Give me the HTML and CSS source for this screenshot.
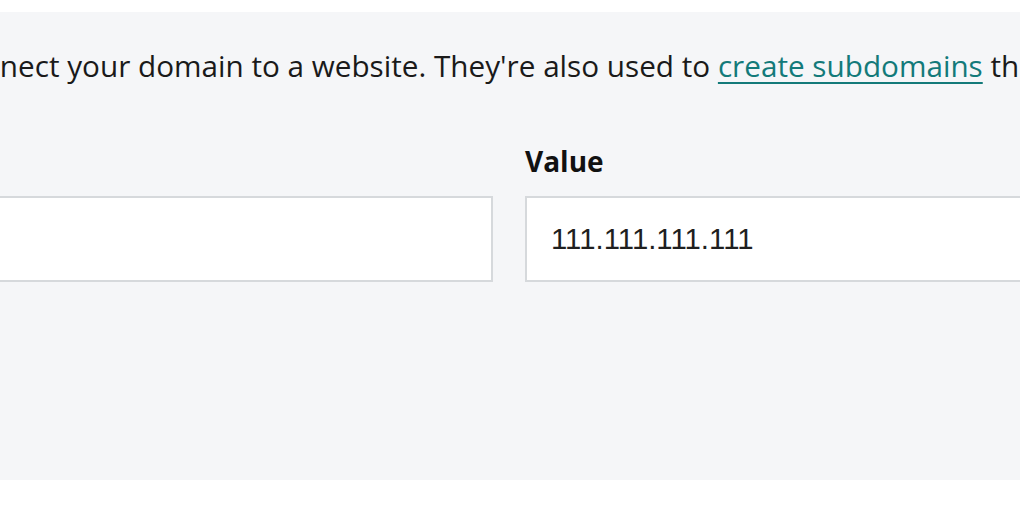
FILE: index.html
```html
<!DOCTYPE html>
<html lang="en">
<head>
<meta charset="utf-8">
<title>A record</title>
<link rel="stylesheet" href="styles.css">
</head>
<body>
<section class="panel">
  <div class="content">
    <p class="intro">A records connect your domain to a website. They're also used to <a href="#" class="link">create subdomains</a> that point to an IP address.</p>
    <div class="fields">
      <div class="field">
        <label class="label" for="name">Name</label>
        <input class="input" id="name" type="text" value="">
      </div>
      <div class="field">
        <label class="label" for="value">Value</label>
        <input class="input" id="value" type="text" value="111.111.111.111">
      </div>
    </div>
  </div>
</section>
</body>
</html>
```
FILE: styles.css
```css
html, body {
  margin: 0;
  padding: 0;
  background: #ffffff;
  overflow: hidden;
  width: 1020px;
  height: 510px;
}
.panel {
  margin-top: 12px;
  height: 468px;
  background: #f5f6f8;
  overflow: hidden;
}
.content {
  margin-left: -190px;
  padding-top: 34px;
  width: 1500px;
}
.intro {
  margin: 0 0 57px 0;
  font-family: "Open Sans", sans-serif;
  font-size: 29.7px;
  line-height: 40px;
  color: #1a1a1a;
  white-space: nowrap;
}
.link {
  color: #137a7a;
  text-decoration: underline;
  text-decoration-thickness: 2px;
  text-underline-offset: 5px;
}
.fields {
  display: grid;
  grid-template-columns: 683px 683px;
  column-gap: 32px;
}
.field {
  display: flex;
  flex-direction: column;
}
.label {
  font-family: "Open Sans", sans-serif;
  font-weight: 700;
  font-size: 28px;
  line-height: 36px;
  color: #111111;
  margin-bottom: 17px;
}
.field:first-child .label {
  visibility: hidden;
}
.input {
  box-sizing: border-box;
  height: 86px;
  width: 100%;
  margin: 0;
  border: 2px solid #d6d9dc;
  border-radius: 0;
  background: #ffffff;
  padding: 0 24px;
  font-family: "Liberation Sans", Arial, sans-serif;
  font-size: 29.3px;
  color: #1f1f1f;
  outline: none;
}
```
